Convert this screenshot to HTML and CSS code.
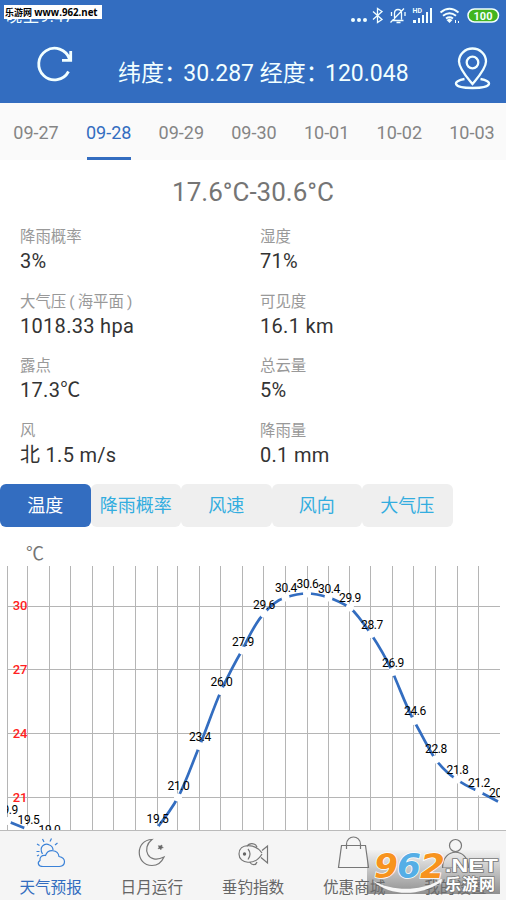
FILE: index.html
```html
<!DOCTYPE html>
<html lang="zh-CN">

<head>
    <meta charset="UTF-8">
    <meta name="viewport" content="width=device-width, initial-scale=1.0">
    <title>天气预报</title>
    <link rel="stylesheet" href="styles.css">
</head>

<body>
    <header>
        <div class="statusbar">
            <span class="time">晚上9:47</span>
            <svg class="status-icons" width="152" height="20" viewBox="350 5 152 20">
                <g fill="#f2ffff">
                    <circle cx="353" cy="20" r="2" />
                    <circle cx="359" cy="20" r="2" />
                    <circle cx="365" cy="20" r="2" />
                </g>
                <path class="st" d="M373 11.500l9 8-4.500 3V8.500l4.500 3-9 8" />
                <path class="st" d="M393 20.500h10.500M394.500 19.500v-6c0-2.500 1.500-4 3.500-4s3.500 1.500 3.500 4v6M396.500 22.500h4M390.500 22.500L404 8.500M391.500 12v4M405 12v4" />
                <text class="hd" x="412.500" y="13">HD</text>
                <g fill="#f2ffff">
                    <rect x="413" y="20" width="3" height="3" />
                    <rect x="418" y="18" width="2" height="5" />
                    <rect x="422" y="15" width="2" height="8" />
                    <rect x="426" y="12" width="2" height="11" />
                    <rect x="430" y="8" width="2" height="15" />
                    <path d="M446.500 20l3-1.500 3 1.500-3 3z" />
                    <path d="M455 20h1v3h-1zM458 21h1v2h-1z" />
                </g>
                <path class="wf" d="M440.500 12.500q9-7.500 18 0M443 15.800q6.500-5 13 0M446 18.500q3.500-2.500 7 0" />
                <rect x="468" y="9" width="30.500" height="13" rx="6.500" fill="#43b51f" stroke="#f2ffff" stroke-width="1.500" />
                <text class="battery" x="483" y="19.500">100</text>
            </svg>
            <div class="site-tag"><b>乐游网</b> <span>www.962.net</span></div>
        </div>
        <div class="titlebar">
            <svg width="40" height="40" viewBox="34 47 40 40">
                <path class="refresh" d="M68.500 73.500A15.800 15.800 0 1 1 69.500 61M70.700 53v9.300h-8.700" />
            </svg>
            <h1>纬度<i>：</i>30.287 经度<i>：</i>120.048</h1>
            <svg width="40" height="46" viewBox="452 43 40 46">
                <path class="pin" d="M472.500 82c-4-5-13.500-15-13.500-22.500a13.500 13 0 0 1 27 0C486 67 476.500 77 472.500 82z" />
                <circle class="pin" cx="472.500" cy="60.500" r="5.800" />
                <path class="pin" d="M464.500 77c-12 2-13 9 8 9s20-7 8-9" />
            </svg>
        </div>
    </header>

    <nav class="dates">
        <span>09-27</span>
        <span class="active">09-28</span>
        <span>09-29</span>
        <span>09-30</span>
        <span>10-01</span>
        <span>10-02</span>
        <span>10-03</span>
    </nav>

    <h2 class="range">17.6°C-30.6°C</h2>

    <div class="details">
        <div class="item"><label>降雨概率</label><p>3%</p></div>
        <div class="item"><label>湿度</label><p>71%</p></div>
        <div class="item"><label>大气压<u>(</u>海平面<u>)</u></label><p>1018.33 hpa</p></div>
        <div class="item"><label>可见度</label><p>16.1 km</p></div>
        <div class="item"><label>露点</label><p>17.3℃</p></div>
        <div class="item"><label>总云量</label><p>5%</p></div>
        <div class="item"><label>风</label><p>北 1.5 m/s</p></div>
        <div class="item"><label>降雨量</label><p>0.1 mm</p></div>
    </div>

    <div class="buttons">
        <button class="active">温度</button>
        <button>降雨概率</button>
        <button>风速</button>
        <button>风向</button>
        <button>大气压</button>
    </div>

    <div class="chart">
        <div class="unit">℃</div>
        <svg width="506" height="264" viewBox="0 566 506 264">
            <defs>
                <clipPath id="plot">
                    <rect x="7" y="566" width="493" height="264" />
                </clipPath>
            </defs>
            <path class="grid" d="M7.500 566v264M27.500 566v264M49.500 566v264M70.500 566v264M92.500 566v264M113.500 566v264M135.500 566v264M157.500 566v264M177.500 566v264M199.500 566v264M220.500 566v264M242.500 566v264M263.500 566v264M285.500 566v264M307.500 566v264M328.500 566v264M349.500 566v264M370.500 566v264M392.500 566v264M413.500 566v264M435.500 566v264M457.500 566v264M478.500 566v264M7 606.500h493M7 669.500h493M7 733.500h493M7 797.500h493" />
            <g class="axis">
                <text x="27.500" y="610">30</text>
                <text x="27.500" y="674">27</text>
                <text x="27.500" y="738">24</text>
                <text x="27.500" y="801.500">21</text>
            </g>
            <g clip-path="url(#plot)">
                <path class="line" d="M7 821L28 829.500 49 840M157 828C164 819 171 810 178 797.500C186 782 192 764 199.500 746C207 728 213 709 221 691C228 676 234 664 242 650.500C249 637 254 624 264 613.500C271 605 277 600 285.500 597.500C293 595 300 593.500 307 593.500C314 593.500 321 595 328.500 597.500C336 600 342 603 350 607.500C358 615 364 624 371 634C379 646 386 658 392.500 672C400 689 406 706 414 721C422 735 428 748 435.500 759.500C443 769 449 775 457 779.500C464 785 471 788 479 791.500L498 801.500" />
                <!-- gaps at the data points -->
                <g class="dots">
                    <circle cx="7" cy="821" r="4" />
                    <circle cx="28" cy="829.500" r="4" />
                    <circle cx="156" cy="829.500" r="4" />
                    <circle cx="178" cy="797.500" r="4" />
                    <circle cx="199.500" cy="746" r="4" />
                    <circle cx="221" cy="691" r="4" />
                    <circle cx="242.500" cy="650.500" r="4" />
                    <circle cx="264" cy="613.500" r="4" />
                    <circle cx="285.500" cy="597.500" r="4" />
                    <circle cx="307" cy="593.500" r="4" />
                    <circle cx="328.500" cy="597.500" r="4" />
                    <circle cx="350" cy="607.500" r="4" />
                    <circle cx="371" cy="634" r="4" />
                    <circle cx="392.500" cy="672" r="4" />
                    <circle cx="414" cy="721" r="4" />
                    <circle cx="435.500" cy="759.500" r="4" />
                    <circle cx="457" cy="779.500" r="4" />
                    <circle cx="479" cy="791.500" r="4" />
                </g>
                <g class="values">
                    <text x="7" y="814">19.9</text>
                    <text x="28.500" y="823.500">19.5</text>
                    <text x="49.500" y="834">19.0</text>
                    <text x="157.500" y="823">19.5</text>
                    <text x="178.500" y="790">21.0</text>
                    <text x="200" y="741">23.4</text>
                    <text x="221.500" y="685.500">26.0</text>
                    <text x="243" y="646">27.9</text>
                    <text x="264" y="608.500">29.6</text>
                    <text x="286" y="592">30.4</text>
                    <text x="307.500" y="588">30.6</text>
                    <text x="329" y="592.500">30.4</text>
                    <text x="350" y="601.500">29.9</text>
                    <text x="372" y="629">28.7</text>
                    <text x="393" y="666.500">26.9</text>
                    <text x="415" y="715">24.6</text>
                    <text x="436" y="752.500">22.8</text>
                    <text x="457.500" y="774">21.8</text>
                    <text x="479" y="786.500">21.2</text>
                    <text x="500" y="796.500">20.7</text>
                </g>
            </g>
        </svg>
    </div>

    <footer>
        <div class="tab active">
            <svg width="34" height="32" viewBox="34 836 34 32">
                <path d="M43 866.500h16.500c6.500-1 7-8.500-.5-10-1-7-11-8-13.500-1-4-.5-6 2-5.500 5-3 2-2 6 3 6z" />
                <path d="M42.500 854c-4-7 2-11.500 7-9 2.500 1 3.500 3 3.500 5M42.500 839l1.500 3M51.500 838.500l-1.500 3M37 844l2.500 1.500M57.500 843l-2.500 2M36.500 851.500h3M37 856l2-1" />
            </svg>
            <span>天气预报</span>
        </div>
        <div class="tab">
            <svg width="34" height="32" viewBox="135 836 34 32">
                <path d="M152 839.500c-17 .5-17 25.500 0 26 6 0 10-4 12-8.500-16 8-23-9-12-17.500z" />
                <path class="star" d="M162 845l-.3 1.600 1.600 1-1.800.5-.6 1.700-1-1.300-1.800.2 1-1.500-.7-1.500 1.700.4z" />
            </svg>
            <span>日月运行</span>
        </div>
        <div class="tab">
            <svg width="34" height="32" viewBox="236 836 34 32">
                <path d="M262 853c-7-10-23-10-23 1 0 10 16 12 23 0M262 850.500l5.500-4.500v17l-6.500-5.500M247 846.500c2-4 8-4 10 .5M250 862.500c2 3 6 3 7-.5M248 849c2.500 3 2.500 7 0 10.500" />
                <circle class="eye" cx="244.500" cy="854" r="1.700" />
            </svg>
            <span>垂钓指数</span>
        </div>
        <div class="tab">
            <svg width="34" height="32" viewBox="337 836 34 32">
                <path d="M341.500 845.500h24l3 22h-30zM346.500 849v-4.500c0-10 14-10 14 0v4.500" />
            </svg>
            <span>优惠商城</span>
        </div>
        <div class="tab">
            <svg width="34" height="32" viewBox="438 836 34 32">
                <circle cx="455.500" cy="845.500" r="6" />
                <path d="M442.500 868c0-21 26-21 26 0z" />
            </svg>
            <span>我的设置</span>
        </div>
    </footer>

    <div class="watermark">
        <svg width="134" height="44" viewBox="367 850 134 44">
            <g class="num">
                <text x="374" y="877.500" fill="#f7931e" textLength="24" lengthAdjust="spacingAndGlyphs">9</text>
                <text x="397" y="877.500" fill="#55aee6" textLength="24" lengthAdjust="spacingAndGlyphs">6</text>
                <text x="420" y="877.500" fill="#f7931e" textLength="25" lengthAdjust="spacingAndGlyphs">2</text>
            </g>
            <path fill="#f7f7f7" d="M373 881c20 10 45 11 66-.5l-3-.5 6-1-1 6-1-2.500c-20 14-50 14-67-1.500z" />
            <text class="net" x="445" y="872" textLength="53" lengthAdjust="spacingAndGlyphs">.NET</text>
            <text class="cn" x="445" y="889.500" textLength="50">乐游网</text>
        </svg>
    </div>
</body>

</html>
```
FILE: styles.css
```css
* {
    padding: 0;
    margin: 0;
    box-sizing: border-box;
}

body {
    width: 506px;
    height: 900px;
    overflow: hidden;
    background: #fff;
    color: #333;
    font-family: Roboto, "Noto Sans CJK SC", sans-serif;
    display: flex;
    flex-direction: column;
}

svg {
    display: block;
}

header {
    height: 103px;
    background: #336dc0;
    color: #f2ffff;
}

.statusbar {
    position: relative;
    height: 30px;
    display: flex;
    justify-content: space-between;
    padding: 5px 4px 0 6px;
}

.time {
    font-size: 16px;
    line-height: 24px;
    letter-spacing: .9px;
}

/* sits over the clock */
.site-tag {
    position: absolute;
    left: 4px;
    top: 5px;
    width: 98px;
    height: 14px;
    background: #fff;
    color: #000;
    font-size: 9px;
    line-height: 15px;
    white-space: nowrap;
    padding-left: 1px;
}

.site-tag span {
    font-family: "Open Sans", sans-serif;
    font-weight: bold;
    font-size: 9.7px;
}

.st {
    fill: none;
    stroke: #f2ffff;
    stroke-width: 1.3;
}

.wf {
    fill: none;
    stroke: #f2ffff;
    stroke-width: 2;
}

.hd {
    font-size: 7px;
    font-weight: bold;
    fill: #f2ffff;
}

.battery {
    font-size: 11px;
    font-weight: bold;
    text-anchor: middle;
    fill: #f2ffff;
}

.titlebar {
    height: 73px;
    display: flex;
    align-items: flex-start;
    justify-content: space-between;
    padding: 15px 14px 0 34px;
}

.titlebar h1 {
    font-size: 23px;
    font-weight: normal;
    line-height: 30px;
    margin-top: 14px;
    width: 290px;
    white-space: nowrap;
}

.titlebar h1 i {
    display: inline-block;
    width: 19.3px;
    font-style: normal;
}

.refresh {
    fill: none;
    stroke: #f2ffff;
    stroke-width: 2.8;
}

.pin {
    fill: none;
    stroke: #f2ffff;
    stroke-width: 2.3;
}

.dates {
    height: 57px;
    background: #fafafa;
    display: flex;
    justify-content: space-between;
    padding: 0 12px 0 14px;
    color: #858585;
    font-size: 18px;
    line-height: 60px;
}

.dates span {
    width: 44px;
    height: 57px;
    display: flex;
    justify-content: center;
    white-space: nowrap;
}

.dates .active {
    color: #336dc0;
    border-bottom: 3px solid #336dc0;
}

.range {
    height: 66px;
    line-height: 64px;
    text-align: center;
    font-size: 26px;
    font-weight: normal;
    color: #757575;
}

.details {
    height: 258px;
    display: grid;
    grid-template-columns: 240px 240px;
    grid-auto-rows: 64.7px;
    padding-left: 20px;
}

.item label {
    display: block;
    height: 22px;
    font-size: 15.4px;
    line-height: 22px;
    color: #999;
}

.item label u {
    display: inline-block;
    width: 11.5px;
    text-align: center;
    text-decoration: none;
}

.item p {
    font-size: 20px;
    line-height: 26px;
    letter-spacing: .3px;
}

.buttons {
    height: 43px;
    display: flex;
}

.buttons button {
    width: 90.5px;
    border: 0;
    border-radius: 6px;
    background: #efefef;
    color: #33addf;
    font-family: inherit;
    font-size: 18px;
    line-height: 42px;
    padding-top: 1px;
    white-space: nowrap;
}

.buttons .active {
    background: #336dc0;
    color: #fff;
}

.chart {
    height: 303px;
}

.unit {
    height: 39px;
    padding: 12px 0 0 26px;
    font-family: "Noto Sans CJK SC", sans-serif;
    font-size: 18px;
    line-height: 27px;
    color: #757575;
}

.grid {
    fill: none;
    stroke: #b5b5b5;
    stroke-width: 1;
}

.axis {
    font-size: 13px;
    font-weight: 500;
    fill: #f22;
    text-anchor: end;
}

.line {
    fill: none;
    stroke: #336dc0;
    stroke-width: 2.7;
}

.dots {
    fill: #fff;
}

.values {
    font-size: 12px;
    letter-spacing: -.4px;
    fill: #000;
    text-anchor: middle;
}

footer {
    height: 70px;
    background: #f5f5f5;
    border-top: 1px solid #bbb;
    display: flex;
}

.tab {
    flex: 1;
    display: flex;
    flex-direction: column;
    align-items: center;
    padding-top: 5px;
    color: #666;
    font-size: 15.6px;
    line-height: 22px;
}

.tab span {
    margin-top: 9px;
}

.tab svg {
    fill: none;
    stroke: #777;
    stroke-width: 1.2;
}

.tab .star,
.tab .eye {
    fill: #666;
    stroke: none;
}

.tab .star {
    stroke: #666;
    stroke-width: .6;
}

.tab.active {
    color: #336dc0;
}

.tab.active svg {
    stroke: #3b82d8;
}

.watermark {
    position: absolute;
    left: 367px;
    top: 850px;
    width: 133px;
    height: 44px;
    background: linear-gradient(rgba(150, 150, 150, .03), rgba(110, 110, 110, .75));
}

.num {
    font-family: "DejaVu Sans", sans-serif;
    font-size: 33px;
    font-weight: bold;
    font-style: italic;
    stroke: #fff;
    stroke-width: 1.5;
    paint-order: stroke;
}

.net,
.cn {
    font-family: "Liberation Sans", "Noto Sans CJK SC", sans-serif;
    font-weight: bold;
    font-size: 18px;
    fill: #fff;
    stroke: #777;
    stroke-width: 1.5;
    paint-order: stroke;
}

.cn {
    font-size: 16px;
}
```
